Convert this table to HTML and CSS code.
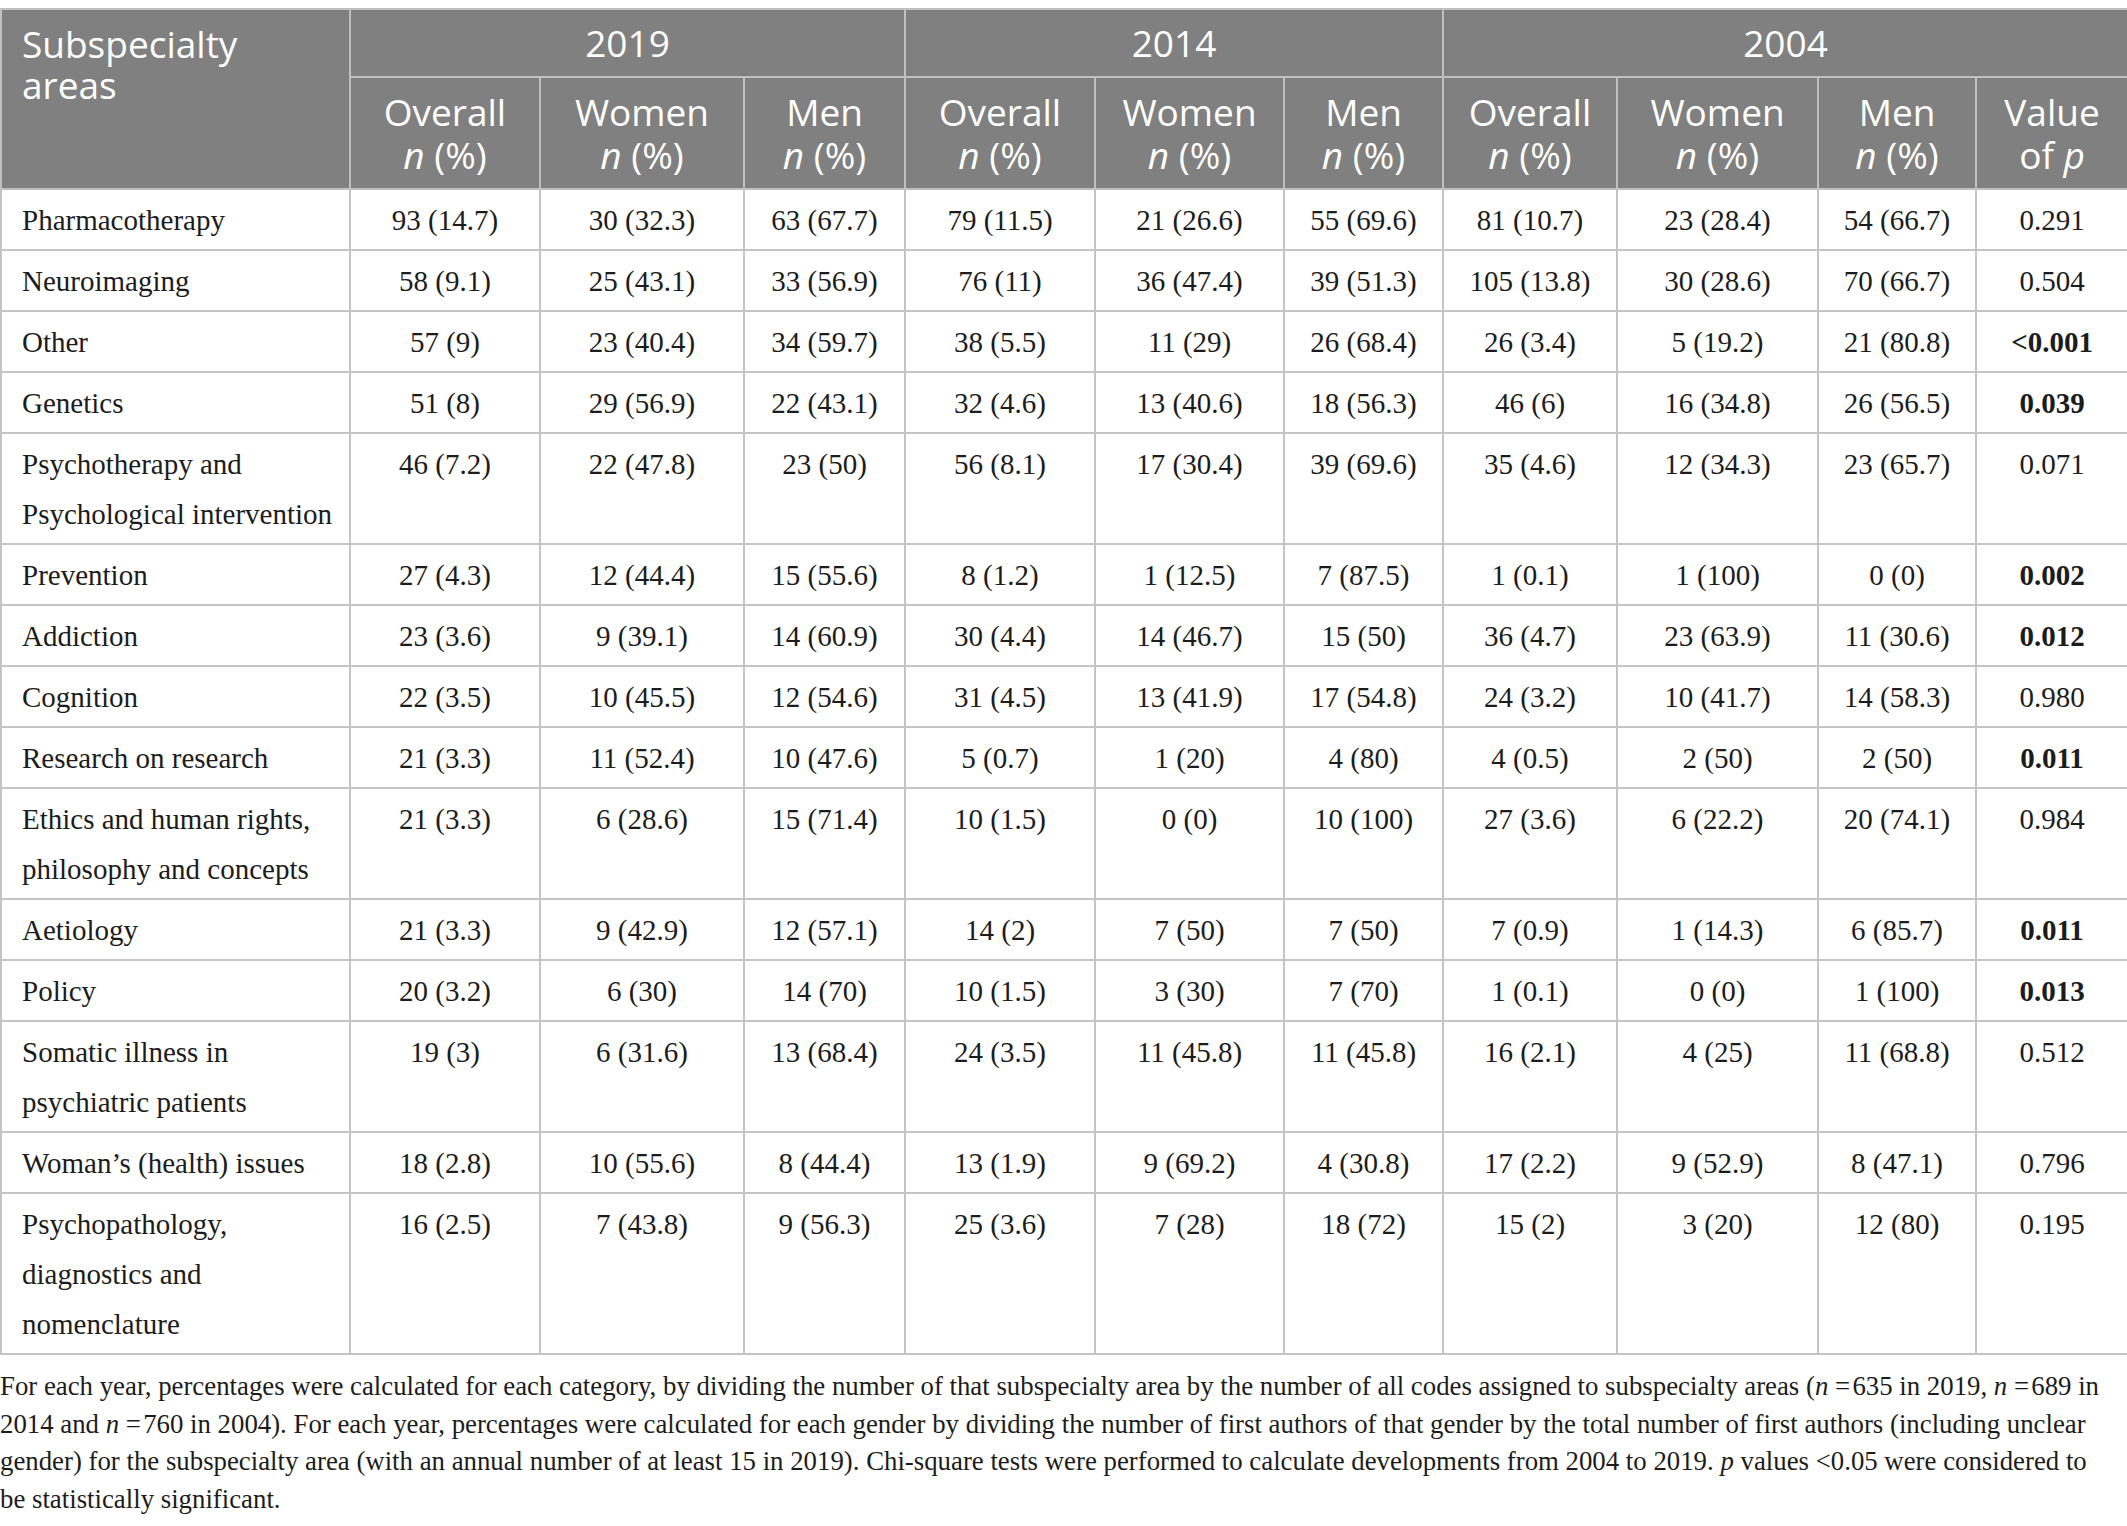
FILE: index.html
```html
<!DOCTYPE html>
<html>
<head>
<meta charset="utf-8">
<link rel="stylesheet" href="styles.css">
</head>
<body>
<div class="wrap">
<table class="tbl">
<colgroup>
<col class="c0"><col class="c1"><col class="c2"><col class="c3"><col class="c4"><col class="c5"><col class="c6"><col class="c7"><col class="c8"><col class="c9"><col class="c10">
</colgroup>
<thead>
<tr class="yr">
<th rowspan="2" class="first">Subspecialty areas</th>
<th colspan="3">2019</th>
<th colspan="3">2014</th>
<th colspan="4">2004</th>
</tr>
<tr class="sub">
<th>Overall<br><i>n</i> (%)</th>
<th>Women<br><i>n</i> (%)</th>
<th>Men<br><i>n</i> (%)</th>
<th>Overall<br><i>n</i> (%)</th>
<th>Women<br><i>n</i> (%)</th>
<th>Men<br><i>n</i> (%)</th>
<th>Overall<br><i>n</i> (%)</th>
<th>Women<br><i>n</i> (%)</th>
<th>Men<br><i>n</i> (%)</th>
<th>Value<br>of <i>p</i></th>
</tr>
</thead>
<tbody>
<tr><td>Pharmacotherapy</td><td>93 (14.7)</td><td>30 (32.3)</td><td>63 (67.7)</td><td>79 (11.5)</td><td>21 (26.6)</td><td>55 (69.6)</td><td>81 (10.7)</td><td>23 (28.4)</td><td>54 (66.7)</td><td>0.291</td></tr>
<tr><td>Neuroimaging</td><td>58 (9.1)</td><td>25 (43.1)</td><td>33 (56.9)</td><td>76 (11)</td><td>36 (47.4)</td><td>39 (51.3)</td><td>105 (13.8)</td><td>30 (28.6)</td><td>70 (66.7)</td><td>0.504</td></tr>
<tr><td>Other</td><td>57 (9)</td><td>23 (40.4)</td><td>34 (59.7)</td><td>38 (5.5)</td><td>11 (29)</td><td>26 (68.4)</td><td>26 (3.4)</td><td>5 (19.2)</td><td>21 (80.8)</td><td><b>&lt;0.001</b></td></tr>
<tr><td>Genetics</td><td>51 (8)</td><td>29 (56.9)</td><td>22 (43.1)</td><td>32 (4.6)</td><td>13 (40.6)</td><td>18 (56.3)</td><td>46 (6)</td><td>16 (34.8)</td><td>26 (56.5)</td><td><b>0.039</b></td></tr>
<tr><td>Psychotherapy and<br>Psychological intervention</td><td>46 (7.2)</td><td>22 (47.8)</td><td>23 (50)</td><td>56 (8.1)</td><td>17 (30.4)</td><td>39 (69.6)</td><td>35 (4.6)</td><td>12 (34.3)</td><td>23 (65.7)</td><td>0.071</td></tr>
<tr><td>Prevention</td><td>27 (4.3)</td><td>12 (44.4)</td><td>15 (55.6)</td><td>8 (1.2)</td><td>1 (12.5)</td><td>7 (87.5)</td><td>1 (0.1)</td><td>1 (100)</td><td>0 (0)</td><td><b>0.002</b></td></tr>
<tr><td>Addiction</td><td>23 (3.6)</td><td>9 (39.1)</td><td>14 (60.9)</td><td>30 (4.4)</td><td>14 (46.7)</td><td>15 (50)</td><td>36 (4.7)</td><td>23 (63.9)</td><td>11 (30.6)</td><td><b>0.012</b></td></tr>
<tr><td>Cognition</td><td>22 (3.5)</td><td>10 (45.5)</td><td>12 (54.6)</td><td>31 (4.5)</td><td>13 (41.9)</td><td>17 (54.8)</td><td>24 (3.2)</td><td>10 (41.7)</td><td>14 (58.3)</td><td>0.980</td></tr>
<tr><td>Research on research</td><td>21 (3.3)</td><td>11 (52.4)</td><td>10 (47.6)</td><td>5 (0.7)</td><td>1 (20)</td><td>4 (80)</td><td>4 (0.5)</td><td>2 (50)</td><td>2 (50)</td><td><b>0.011</b></td></tr>
<tr><td>Ethics and human rights,<br>philosophy and concepts</td><td>21 (3.3)</td><td>6 (28.6)</td><td>15 (71.4)</td><td>10 (1.5)</td><td>0 (0)</td><td>10 (100)</td><td>27 (3.6)</td><td>6 (22.2)</td><td>20 (74.1)</td><td>0.984</td></tr>
<tr><td>Aetiology</td><td>21 (3.3)</td><td>9 (42.9)</td><td>12 (57.1)</td><td>14 (2)</td><td>7 (50)</td><td>7 (50)</td><td>7 (0.9)</td><td>1 (14.3)</td><td>6 (85.7)</td><td><b>0.011</b></td></tr>
<tr><td>Policy</td><td>20 (3.2)</td><td>6 (30)</td><td>14 (70)</td><td>10 (1.5)</td><td>3 (30)</td><td>7 (70)</td><td>1 (0.1)</td><td>0 (0)</td><td>1 (100)</td><td><b>0.013</b></td></tr>
<tr><td>Somatic illness in<br>psychiatric patients</td><td>19 (3)</td><td>6 (31.6)</td><td>13 (68.4)</td><td>24 (3.5)</td><td>11 (45.8)</td><td>11 (45.8)</td><td>16 (2.1)</td><td>4 (25)</td><td>11 (68.8)</td><td>0.512</td></tr>
<tr><td>Woman’s (health) issues</td><td>18 (2.8)</td><td>10 (55.6)</td><td>8 (44.4)</td><td>13 (1.9)</td><td>9 (69.2)</td><td>4 (30.8)</td><td>17 (2.2)</td><td>9 (52.9)</td><td>8 (47.1)</td><td>0.796</td></tr>
<tr><td>Psychopathology,<br>diagnostics and<br>nomenclature</td><td>16 (2.5)</td><td>7 (43.8)</td><td>9 (56.3)</td><td>25 (3.6)</td><td>7 (28)</td><td>18 (72)</td><td>15 (2)</td><td>3 (20)</td><td>12 (80)</td><td>0.195</td></tr>
</tbody>
</table>
<p class="note">For each year, percentages were calculated for each category, by dividing the number of that subspecialty area by the number of all codes assigned to subspecialty areas (<i>n</i> =&#8202;635 in 2019, <i>n</i> =&#8202;689 in<br>2014 and <i>n</i> =&#8202;760 in 2004). For each year, percentages were calculated for each gender by dividing the number of first authors of that gender by the total number of first authors (including unclear<br>gender) for the subspecialty area (with an annual number of at least 15 in 2019). Chi-square tests were performed to calculate developments from 2004 to 2019. <i>p</i> values &lt;0.05 were considered to<br>be statistically significant.</p>
</div>
</body>
</html>
```

FILE: styles.css
```css
html, body {
  margin: 0;
  padding: 0;
  background: #ffffff;
}
.wrap {
  padding-top: 8px;
}
.tbl {
  width: 2127px;
  table-layout: fixed;
  border-collapse: collapse;
  font-family: "Liberation Serif", "Times New Roman", serif;
  color: #1c1c1c;
}
.c0 { width: 349px; }
.c1 { width: 190px; }
.c2 { width: 204px; }
.c3 { width: 161px; }
.c4 { width: 190px; }
.c5 { width: 189px; }
.c6 { width: 159px; }
.c7 { width: 174px; }
.c8 { width: 201px; }
.c9 { width: 158px; }
.c10 { width: 152px; }

.tbl th {
  background: #7f807f;
  color: #ffffff;
  font-family: "Open Sans", "Noto Sans", sans-serif;
  font-weight: 400;
  font-size: 37px;
  line-height: 42px;
  border: 2px solid #c0c0c0;
  text-align: center;
  vertical-align: top;
}
.tbl th i {
  font-style: italic;
}
.yr th {
  padding: 12px 8px 12px;
}
.yr th.first {
  text-align: left;
  padding: 13px 20px;
  line-height: 41px;
}
.sub th {
  padding: 12px 4px 12px;
  line-height: 43px;
}
.tbl td {
  font-size: 29px;
  line-height: 50px;
  padding: 5px 4px 4px;
  border: 2px solid #c4c4c4;
  text-align: center;
  vertical-align: top;
  white-space: nowrap;
}
.tbl td:first-child {
  text-align: left;
  padding-left: 20px;
}
.tbl td b {
  font-weight: 700;
}
.note {
  margin: 13px 0 0;
  font-family: "Liberation Serif", "Times New Roman", serif;
  font-size: 26.8px;
  line-height: 37.7px;
  color: #1c1c1c;
  white-space: nowrap;
}
```
